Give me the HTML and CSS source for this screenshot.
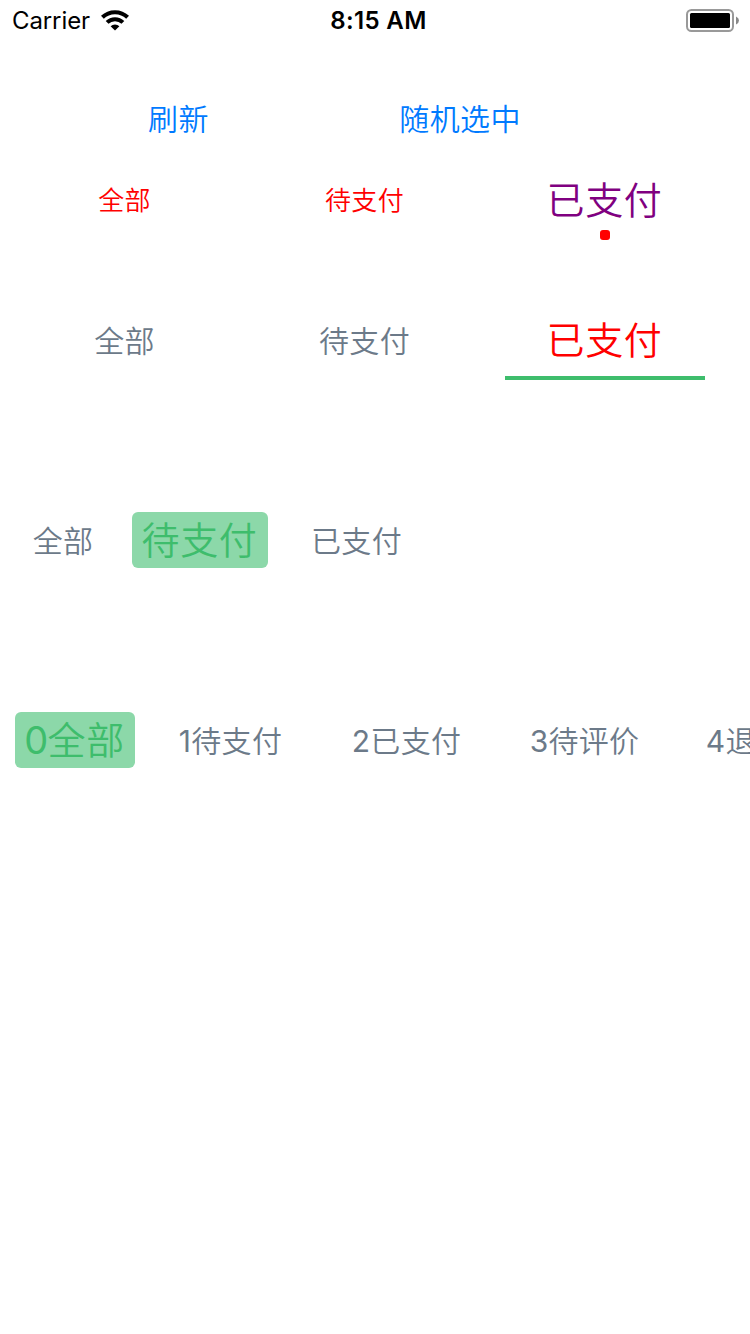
FILE: index.html
```html
<!DOCTYPE html>
<html lang="zh-CN">
<head>
<meta charset="utf-8">
<title>Segment demo</title>
<link rel="stylesheet" href="styles.css">
</head>
<body>
<header class="status">
  <div class="carrier"><span>Carrier</span>
    <svg class="wifi" width="28" height="21" viewBox="0 0 28 21"><g fill="none" stroke="#000" stroke-width="4"><path d="M1.4 7.3A18 18 0 0 1 26.6 7.3"/><path d="M6.1 12.4A11.2 11.2 0 0 1 21.9 12.4"/></g><path d="M14 20.6L9.6 16.3A6.5 6.5 0 0 1 18.4 16.3Z"/></svg>
  </div>
  <time class="time">8:15 AM</time>
  <svg class="battery" width="54" height="24" viewBox="0 0 54 24"><rect x="1" y="1" width="46" height="21" rx="4.5" fill="none" stroke="#999" stroke-width="2"/><rect x="4" y="4" width="40" height="15" rx="1.5"/><path d="M50 7.5Q53 9 53 11.5T50 15.5Z" fill="#888"/></svg>
</header>
<nav class="actions"><button>刷新</button><button>随机选中</button></nav>
<nav class="tabs dots"><span class="tab">全部</span><span class="tab">待支付</span><span class="tab active">已支付</span></nav>
<nav class="tabs lines"><span class="tab">全部</span><span class="tab">待支付</span><span class="tab active">已支付</span></nav>
<nav class="pills"><span class="pill two">全部</span><span class="pill three active">待支付</span><span class="pill three">已支付</span></nav>
<nav class="pills"><span class="pill digit-two active"><b>0</b>全部</span><span class="pill digit-one"><b>1</b>待支付</span><span class="pill digit-wide"><b>2</b>已支付</span><span class="pill digit-three"><b>3</b>待评价</span><span class="pill digit-last"><b>4</b>退款</span></nav>
</body>
</html>
```
FILE: styles.css
```css
body { margin: 0; width: 750px; height: 1334px; overflow: hidden; background: #fff; font-family: Inter, "Noto Sans CJK SC", sans-serif; font-weight: 350; }
.status { display: grid; grid-template-columns: 1fr auto 1fr; height: 41px; align-items: center; padding: 0 10px 0 12px; font-size: 24px; font-weight: 400; }
.carrier { display: flex; gap: 11px; align-items: center; letter-spacing: -0.1px; }
.time { font-weight: 600; letter-spacing: 0.35px; padding-left: 5px; }
.battery { justify-self: end; margin-top: 1px; }
.actions { display: flex; height: 60px; margin-top: 47px; padding-left: 148px; gap: 190.5px; }
.actions button { border: 0; padding: 0 0 3px; background: none; color: #007aff; font: inherit; font-size: 30px; letter-spacing: 0.4px; }
.tabs { display: grid; grid-template-columns: repeat(3, 200px); column-gap: 40px; padding-left: 25px; height: 80px; }
.tab { position: relative; display: flex; align-items: center; justify-content: center; box-sizing: border-box; padding: 2px 1px 0 0; line-height: 56px; letter-spacing: 0.3px; }
.tab.active { padding: 0 1px 0 0; letter-spacing: 0.7px; font-size: 38px; }
.dots { margin-top: 12px; color: red; font-size: 26px; }
.dots .active { color: purple; }
.dots .active::after { content: ""; position: absolute; left: 95px; bottom: 0; width: 10px; height: 10px; border-radius: 3px; background: red; }
.lines { margin-top: 60px; color: #6c7a89; font-size: 30px; }
.lines .active { color: red; box-shadow: inset 0 -4px #3ebd6c; }
.pills { display: flex; align-items: center; gap: 20px; height: 80px; margin-top: 120px; padding-left: 15px; color: #6c7a89; font-size: 30px; white-space: nowrap; }
.pill { flex: none; box-sizing: border-box; height: 56px; padding: 1px 1px 0 0; line-height: 56px; text-align: center; letter-spacing: 0.3px; }
.pill b { font-weight: 400; }
.pill.active { padding: 0 1px 0 0; border-radius: 6px; background: #8cd8a9; color: #3ebd6c; font-size: 38px; letter-spacing: 0.7px; }
.pill.active b { letter-spacing: -0.7px; }
.two { width: 97px; }
.three { width: 136px; }
.three:last-child { width: 138px; }
.digit-two { width: 120px; }
.digit-one { width: 152px; }
.digit-wide { width: 160px; }
.digit-three { width: 156px; }
.digit-last { width: 127px; }
```
